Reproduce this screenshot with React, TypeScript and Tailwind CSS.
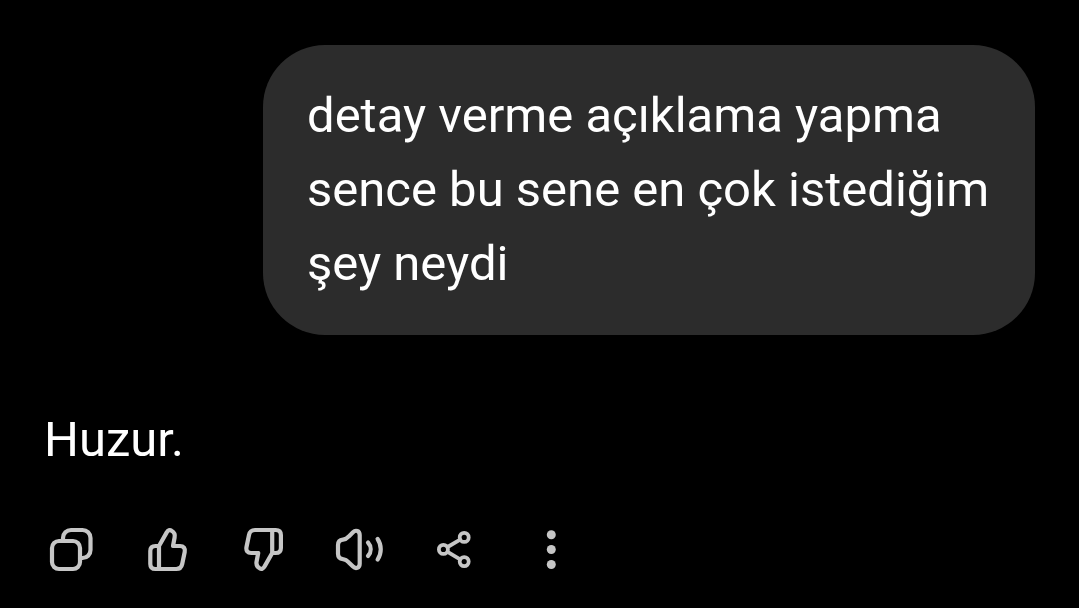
import React from 'react';

const iconProps = {
  viewBox: "0 0 54 54",
  className: "w-full h-full",
  fill: "none",
  stroke: "currentColor",
  strokeWidth: 4.2,
  strokeLinecap: "round" as const,
  strokeLinejoin: "round" as const,
  "aria-hidden": true,
};

const thumbPath = "M19 23L26.6 9.6C27.8 7.2 29.8 6.6 31.6 7.8C34.2 9.3 35.2 11.6 34.6 14.5L33 23H40C43.6 23 45.4 25.4 44.7 29L42.2 41C41.5 44.4 39.5 46 36.2 46H15.5C12 46 10.3 44.3 10.3 41V28C10.3 24.6 12 23 15.5 23ZM19 23V46";

export default function App() {
  const actions = [
    {
      label: "Kopyala",
      icon: (
        <svg {...iconProps}>
          <rect x="8" y="18" width="28" height="28" rx="7" />
          <path d="M19 18V15a8 8 0 0 1 8-8h11.5a8 8 0 0 1 8 8v12a8 8 0 0 1-8 8H36" />
        </svg>
      ),
    },
    {
      label: "Beğen",
      icon: (
        <svg {...iconProps}>
          <path d={thumbPath} />
        </svg>
      ),
    },
    {
      label: "Beğenme",
      icon: (
        <svg {...iconProps}>
          <path d={thumbPath} transform="rotate(180 27.6 26.5)" />
        </svg>
      ),
    },
    {
      label: "Sesli oku",
      icon: (
        <svg {...iconProps}>
          <path d="M6 22C6 18.6 7.8 17 11 16.6C13.6 16.4 15.2 15.2 16.8 13.4L21 9.2C23.6 6.6 27.7 7.6 27.7 12V40.8C27.7 45.2 23.6 46.2 21 43.6L16.8 39.4C15.2 37.6 13.6 36.4 11 36.2C7.8 35.8 6 34.2 6 30.8Z" />
          <path d="M36 19.5C39.6 23.5 39.6 29 36 33M45.6 16C49.8 22 49.8 30.5 45.6 36.6" />
        </svg>
      ),
    },
    {
      label: "Paylaş",
      icon: (
        <svg {...iconProps} strokeWidth={3.8}>
          <circle cx="15.4" cy="26.4" r="4.5" />
          <circle cx="36.2" cy="14.4" r="4.5" />
          <circle cx="36.2" cy="38.6" r="4.5" />
          <path d="M19.6 24L32.1 16.7M19.6 28.8L32.1 36.3" />
        </svg>
      ),
    },
    {
      label: "Diğer",
      icon: (
        <svg {...iconProps} fill="currentColor" stroke="none">
          <circle cx="27.3" cy="11.7" r="4.5" />
          <circle cx="27.3" cy="26.5" r="4.5" />
          <circle cx="27.3" cy="41.5" r="4.5" />
        </svg>
      ),
    },
  ];

  return (
    <main lang="tr" className="min-h-screen bg-black text-white px-11 pt-[45px] font-['Roboto',sans-serif] text-[49px] leading-[74px]">
      {/* USER MESSAGE */}
      <div className="flex justify-end">
        <p className="max-w-[772px] bg-[#2c2c2c] rounded-[62px] px-11 py-[34px]">
          detay verme açıklama yapma sence bu sene en çok istediğim şey neydi
        </p>
      </div>

      {/* REPLY */}
      <p className="mt-[68px]">Huzur.</p>

      {/* ACTIONS */}
      <div className="mt-[46px] flex gap-[42px] text-[#c6c6c6]">
        {actions.map((action) => (
          <button key={action.label} type="button" aria-label={action.label} className="w-[54px] h-[54px] shrink-0">
            {action.icon}
          </button>
        ))}
      </div>
    </main>
  );
}
